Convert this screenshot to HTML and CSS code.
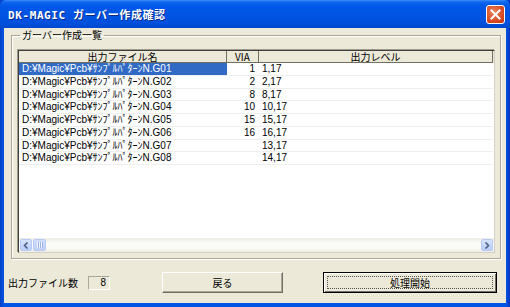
FILE: index.html
```html
<!DOCTYPE html>
<html lang="ja">

<head>
    <meta charset="UTF-8">
    <meta name="viewport" content="width=device-width, initial-scale=1.0">
    <title>DK-MAGIC ガーバー作成確認</title>
    <link rel="stylesheet" href="styles.css">
</head>

<body>
    <div class="window">
        <div class="titlebar">
            <span class="title">DK-MAGIC ガーバー作成確認</span>
            <span class="close-btn">
                <svg width="11" height="11" viewBox="0 0 11 11">
                    <path d="M1.5 1.5 L9.5 9.5 M9.5 1.5 L1.5 9.5" stroke="#fff" stroke-width="2" stroke-linecap="square" />
                </svg>
            </span>
        </div>

        <div class="client">
            <fieldset class="group">
                <legend>ガーバー作成一覧</legend>
                <div class="list">
                    <div class="list-head">
                        <div class="col-name">出力ファイル名</div>
                        <div class="col-via">VIA</div>
                        <div class="col-level">出力レベル</div>
                    </div>
                    <div class="list-body">
                        <div class="row selected">
                            <div class="col-name"><span>D:¥Magic¥Pcb¥ｻﾝﾌﾟﾙﾊﾟﾀｰﾝN.G01</span></div>
                            <div class="col-via">1</div>
                            <div class="col-level">1,17</div>
                        </div>
                        <div class="row">
                            <div class="col-name"><span>D:¥Magic¥Pcb¥ｻﾝﾌﾟﾙﾊﾟﾀｰﾝN.G02</span></div>
                            <div class="col-via">2</div>
                            <div class="col-level">2,17</div>
                        </div>
                        <div class="row">
                            <div class="col-name"><span>D:¥Magic¥Pcb¥ｻﾝﾌﾟﾙﾊﾟﾀｰﾝN.G03</span></div>
                            <div class="col-via">8</div>
                            <div class="col-level">8,17</div>
                        </div>
                        <div class="row">
                            <div class="col-name"><span>D:¥Magic¥Pcb¥ｻﾝﾌﾟﾙﾊﾟﾀｰﾝN.G04</span></div>
                            <div class="col-via">10</div>
                            <div class="col-level">10,17</div>
                        </div>
                        <div class="row">
                            <div class="col-name"><span>D:¥Magic¥Pcb¥ｻﾝﾌﾟﾙﾊﾟﾀｰﾝN.G05</span></div>
                            <div class="col-via">15</div>
                            <div class="col-level">15,17</div>
                        </div>
                        <div class="row">
                            <div class="col-name"><span>D:¥Magic¥Pcb¥ｻﾝﾌﾟﾙﾊﾟﾀｰﾝN.G06</span></div>
                            <div class="col-via">16</div>
                            <div class="col-level">16,17</div>
                        </div>
                        <div class="row">
                            <div class="col-name"><span>D:¥Magic¥Pcb¥ｻﾝﾌﾟﾙﾊﾟﾀｰﾝN.G07</span></div>
                            <div class="col-via"></div>
                            <div class="col-level">13,17</div>
                        </div>
                        <div class="row">
                            <div class="col-name"><span>D:¥Magic¥Pcb¥ｻﾝﾌﾟﾙﾊﾟﾀｰﾝN.G08</span></div>
                            <div class="col-via"></div>
                            <div class="col-level">14,17</div>
                        </div>
                    </div>
                    <div class="hscroll">
                        <span class="sb-btn">
                            <svg width="6" height="7" viewBox="0 0 6 7">
                                <path d="M4.5 0.5 L1.5 3.5 L4.5 6.5" fill="none" stroke="#4d6185" stroke-width="1.6" />
                            </svg>
                        </span>
                        <span class="sb-thumb"><i></i><i></i><i></i></span>
                        <span class="sb-track"></span>
                        <span class="sb-btn">
                            <svg width="6" height="7" viewBox="0 0 6 7">
                                <path d="M1.5 0.5 L4.5 3.5 L1.5 6.5" fill="none" stroke="#4d6185" stroke-width="1.6" />
                            </svg>
                        </span>
                    </div>
                </div>
            </fieldset>

            <div class="footer">
                <span class="count-label">出力ファイル数</span>
                <span class="count-box">8</span>
                <button type="button" class="btn btn-back">戻る</button>
                <button type="button" class="btn btn-start"><span>処理開始</span></button>
            </div>
        </div>
    </div>
</body>

</html>
```

FILE: styles.css
```css
body {
    margin: 0;
    font-family: "Liberation Sans", "Noto Sans CJK JP", sans-serif;
    font-size: 10px;
    color: #000;
}

.window {
    width: 510px;
    height: 307px;
    box-sizing: border-box;
    display: flex;
    flex-direction: column;
    background: linear-gradient(to right, #0841c8, #0055e5 4px, #0055e5 calc(100% - 4px), #0836c0);
}

.titlebar {
    height: 28px;
    flex: none;
    display: flex;
    align-items: center;
    justify-content: space-between;
    padding: 0 5px 0 8px;
    border-radius: 6px 6px 0 0;
    background: linear-gradient(#3d8ef8 0, #1066ee 2px, #0058e8 6px, #0054e3 50%, #0050dc 85%, #0046cc 100%);
}

.title {
    color: #fff;
    font-family: "DejaVu Sans Mono", "Noto Sans CJK JP", monospace;
    font-weight: bold;
    font-size: 11px;
    letter-spacing: 0.6px;
    text-shadow: 1px 1px 0 #0a2a8a;
}

.close-btn {
    width: 19px;
    height: 19px;
    box-sizing: border-box;
    border: 1px solid #fff;
    border-radius: 3px;
    background: radial-gradient(circle at 40% 35%, #e8845a, #d6431c 70%, #c23a14);
    display: flex;
    align-items: center;
    justify-content: center;
}

.client {
    flex: 1;
    margin: 0 4px 4px 4px;
    background: #ece9d8;
    display: flex;
    flex-direction: column;
}

.group {
    margin: 1px 5px 0 7px;
    padding: 0 5px 5px 6px;
    border: 1px solid #aca899;
    box-shadow: inset 1px 1px 0 #fff, 1px 1px 0 #fff;
    min-width: 0;
}

.group legend {
    margin-left: 2px;
    padding: 0 2px;
    line-height: 12px;
    font-family: "Noto Sans CJK JP", sans-serif;
}

.list {
    margin-top: 9px;
    height: 203px;
    box-sizing: border-box;
    border: 1px solid #404040;
    border-right-color: #d4d0c8;
    border-bottom-color: #d4d0c8;
    box-shadow: -1px -1px 0 #9d9a8a;
    background: #fff;
    display: flex;
    flex-direction: column;
}

.list-head {
    display: flex;
    height: 12px;
    flex: none;
    background: #ece9d8;
    line-height: 12px;
    text-align: center;
    font-family: "Noto Sans CJK JP", sans-serif;
}

.list-head > div {
    box-sizing: border-box;
    border-right: 1px solid #716f64;
    border-bottom: 1px solid #716f64;
}

.col-name {
    width: 208px;
    flex: none;
    box-sizing: border-box;
}

.col-via {
    width: 32px;
    flex: none;
    box-sizing: border-box;
}

.col-level {
    width: 234px;
    flex: none;
    box-sizing: border-box;
}

.list-body {
    flex: 1;
}

.row {
    display: flex;
    height: 12.75px;
    line-height: 12px;
    width: 474px;
    box-sizing: border-box;
    border-bottom: 1px solid #efefef;
}

.row .col-name {
    padding-left: 3px;
}

.row .col-via {
    text-align: right;
    padding-right: 4px;
}

.row .col-level {
    padding-left: 3px;
}

.row.selected .col-name {
    background: #316ac5;
    color: #fff;
}

.hscroll {
    display: flex;
    align-items: center;
    height: 14px;
    flex: none;
    padding: 0 1px;
    background: linear-gradient(#eeede5, #fbfbf8 40%, #fbfbf8 70%, #eeede5);
}

.sb-btn {
    width: 12px;
    height: 12px;
    box-sizing: border-box;
    border: 1px solid #b7caf5;
    border-radius: 2px;
    background: linear-gradient(#d6e3fd, #bccffa);
    display: flex;
    align-items: center;
    justify-content: center;
}

.sb-thumb {
    width: 13px;
    height: 12px;
    margin-left: 1px;
    box-sizing: border-box;
    border: 1px solid #b7caf5;
    border-radius: 2px;
    background: linear-gradient(#d0ddfb, #c0d1f8);
    display: flex;
    align-items: center;
    justify-content: center;
    gap: 1px;
}

.sb-thumb i {
    width: 1px;
    height: 6px;
    background: #eef3fe;
    box-shadow: 1px 0 0 #9fb5ea;
}

.sb-track {
    flex: 1;
}

.footer {
    display: flex;
    align-items: center;
    height: 21px;
    margin: 13px 0 0 4px;
}

.count-label {
    font-family: "Noto Sans CJK JP", sans-serif;
}

.count-box {
    width: 22px;
    height: 14px;
    margin-left: 10px;
    box-sizing: border-box;
    border: 1px solid #fff;
    border-top-color: #aca899;
    border-left-color: #aca899;
    text-align: right;
    padding-right: 3px;
    line-height: 12px;
}

.btn {
    height: 21px;
    padding: 0;
    font-family: "Noto Sans CJK JP", sans-serif;
    font-size: 10px;
    background: #ece9d8;
    border: 1px solid #fff;
    border-right-color: #716f64;
    border-bottom-color: #716f64;
    box-shadow: inset -1px -1px 0 #aca899;
}

.btn-back {
    width: 121px;
    margin-left: 52px;
}

.btn-start {
    width: 174px;
    margin-left: 40px;
    border: 1px solid #000;
    box-shadow: inset 1px 1px 0 #fff, inset -1px -1px 0 #716f64;
    padding: 3px;
}

.btn-start span {
    display: block;
    height: 100%;
    box-sizing: border-box;
    border: 1px dotted #555;
    line-height: 11px;
}
```
